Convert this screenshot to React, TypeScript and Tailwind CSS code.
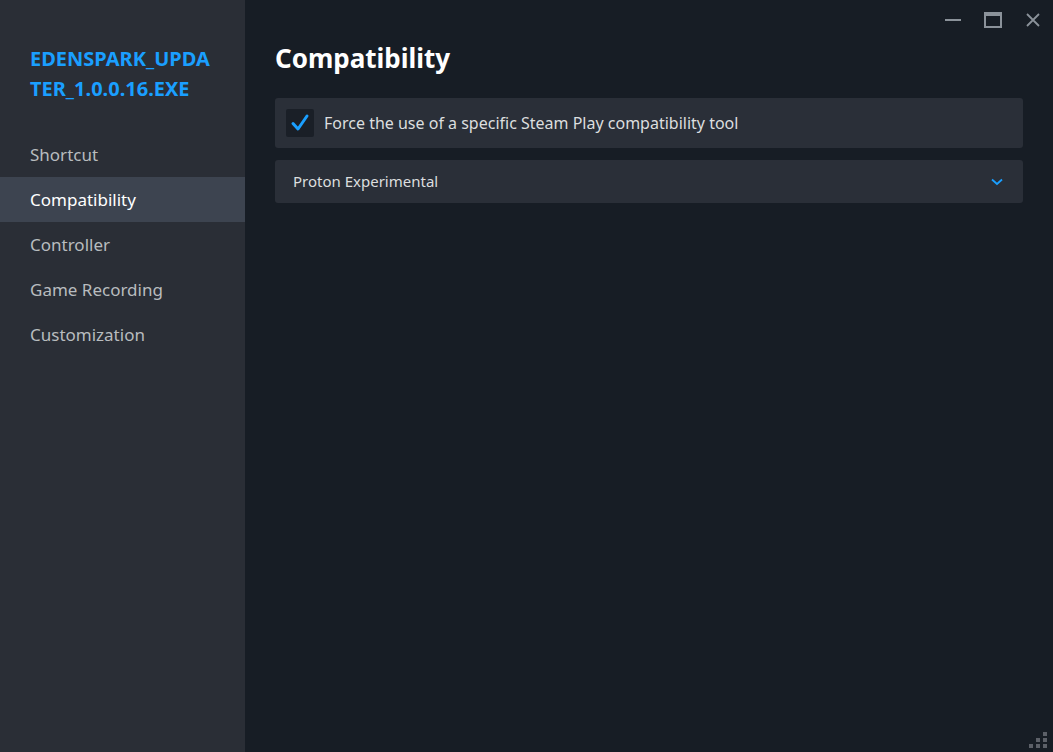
import React from "react";

export default function App() {
  const items = ["Shortcut", "Compatibility", "Controller", "Game Recording", "Customization"];
  return (
    <div className="flex h-[752px] w-[1053px] overflow-hidden bg-[#171d25]" style={{ fontFamily: '"Noto Sans", "Open Sans", sans-serif' }}>
      <div className="flex w-[245px] shrink-0 flex-col bg-[#2a2e36]">
        <div className="px-[30px] pt-[44px] pb-[28px] text-[20px] font-bold leading-[30px] text-[#1a9fff] break-all">
          EDENSPARK_UPDATER_1.0.0.16.EXE
        </div>
        {items.map((t) => (
          <div
            key={t}
            className={
              "flex h-[45px] items-center px-[30px] text-[17px] " +
              (t === "Compatibility" ? "bg-[#3d4450] text-white" : "text-[#b8bcbf]")
            }
          >
            {t}
          </div>
        ))}
      </div>
      <div className="relative flex flex-1 flex-col px-[30px]">
        <div className="absolute right-0 top-0 flex h-[40px] items-center">
          <div className="flex w-[40px] justify-center">
            <div className="h-[2px] w-[16px] bg-[#8b929a]" />
          </div>
          <div className="flex w-[40px] justify-center">
            <div className="h-[16px] w-[18px] border-2 border-t-[4px] border-[#8b929a]" />
          </div>
          <div className="flex w-[40px] justify-center">
            <svg width="16" height="16" viewBox="0 0 16 16" stroke="#8b929a" strokeWidth="1.8">
              <path d="M2 2L14 14M14 2L2 14" />
            </svg>
          </div>
        </div>
        <div className="pt-[40px] text-[26px] font-bold leading-[36px] text-white">Compatibility</div>
        <div className="mt-[22px] flex h-[50px] items-center gap-[10px] rounded-[3px] bg-[#2a2f38] px-[11px]">
          <div className="flex h-[28px] w-[28px] items-center justify-center rounded-[2px] bg-[#1a1f27]">
            <svg width="20" height="20" viewBox="0 0 20 20" fill="none" stroke="#1a9fff" strokeWidth="3" strokeLinecap="round" strokeLinejoin="round">
              <path d="M3 10.5L8 16L17 3" />
            </svg>
          </div>
          <span className="text-[16px] text-[#dcdedf]">Force the use of a specific Steam Play compatibility tool</span>
        </div>
        <div className="mt-[12px] flex h-[43px] items-center justify-between rounded-[3px] bg-[#2a2f38] pl-[18px] pr-[20px]">
          <span className="text-[15px] text-[#dcdedf]">Proton Experimental</span>
          <svg width="12" height="8" viewBox="0 0 12 8" fill="none" stroke="#1a9fff" strokeWidth="1.8">
            <path d="M1 1.5L6 6L11 1.5" />
          </svg>
        </div>
        <div className="absolute bottom-[4px] right-[4px]">
          <svg width="20" height="16" viewBox="0 0 20 16" fill="#5c6068">
            <rect x="14" y="0" width="4" height="4" />
            <rect x="7" y="6" width="4" height="4" />
            <rect x="14" y="6" width="4" height="4" />
            <rect x="0" y="12" width="4" height="4" />
            <rect x="7" y="12" width="4" height="4" />
            <rect x="14" y="12" width="4" height="4" />
          </svg>
        </div>
      </div>
    </div>
  );
}
